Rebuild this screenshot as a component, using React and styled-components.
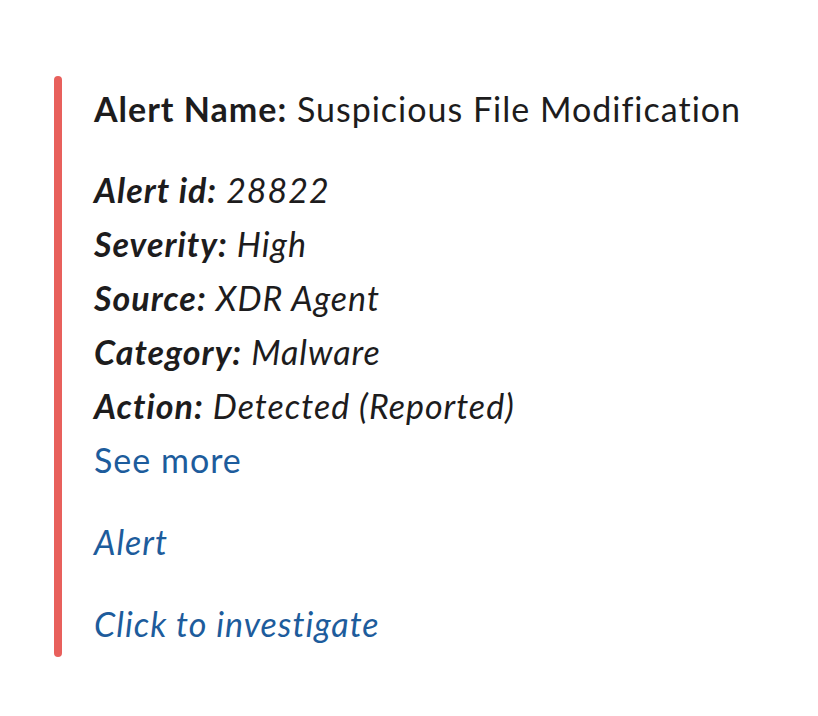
import React from "react";
import styled, { createGlobalStyle } from "styled-components";

const GlobalStyle = createGlobalStyle`
  html, body {
    margin: 0;
    padding: 0;
    background: #ffffff;
  }
  body {
    font-family: Lato, "Noto Sans", sans-serif;
    color: #1d1c1d;
  }
`;

const fields = [
  { label: "Alert id", value: "28822" },
  { label: "Severity", value: "High" },
  { label: "Source", value: "XDR Agent" },
  { label: "Category", value: "Malware" },
  { label: "Action", value: "Detected (Reported)" },
];

const App = () => {
  return (
    <>
      <GlobalStyle />
      <Page>
        <Attachment>
          <Bar />
          <Body>
            <Line>
              <b>Alert Name:</b> Suspicious File Modification
            </Line>
            <Fields>
              {fields.map((f) => (
                <Line key={f.label} $italic>
                  <b>{f.label}:</b> {f.value}
                </Line>
              ))}
              <LinkLine>See more</LinkLine>
            </Fields>
            <LinkLine $italic $gap>
              Alert
            </LinkLine>
            <LinkLine $italic $gap>
              Click to investigate
            </LinkLine>
          </Body>
        </Attachment>
      </Page>
    </>
  );
};

export default App;

const Page = styled.div`
  width: 818px;
  height: 716px;
  padding: 76px 0 0 54px;
  box-sizing: border-box;
`;

const Attachment = styled.div`
  display: flex;
  align-items: stretch;
`;

const Bar = styled.div`
  width: 8px;
  flex-shrink: 0;
  border-radius: 5px;
  background: #e8605c;
`;

const Body = styled.div`
  padding: 6px 0 6px 32px;
  display: flex;
  flex-direction: column;
`;

const Line = styled.div`
  font-size: 34px;
  line-height: 54px;
  letter-spacing: 1px;
  font-style: ${(p) => (p.$italic ? "italic" : "normal")};
  white-space: nowrap;

  b {
    font-weight: 700;
  }
`;

const Fields = styled.div`
  margin-top: 27px;
  display: flex;
  flex-direction: column;
`;

const LinkLine = styled.a`
  display: block;
  font-size: 34px;
  line-height: 54px;
  letter-spacing: 1px;
  color: #1d5c9c;
  cursor: pointer;
  font-style: ${(p) => (p.$italic ? "italic" : "normal")};
  margin-top: ${(p) => (p.$gap ? "28px" : "0")};
`;
